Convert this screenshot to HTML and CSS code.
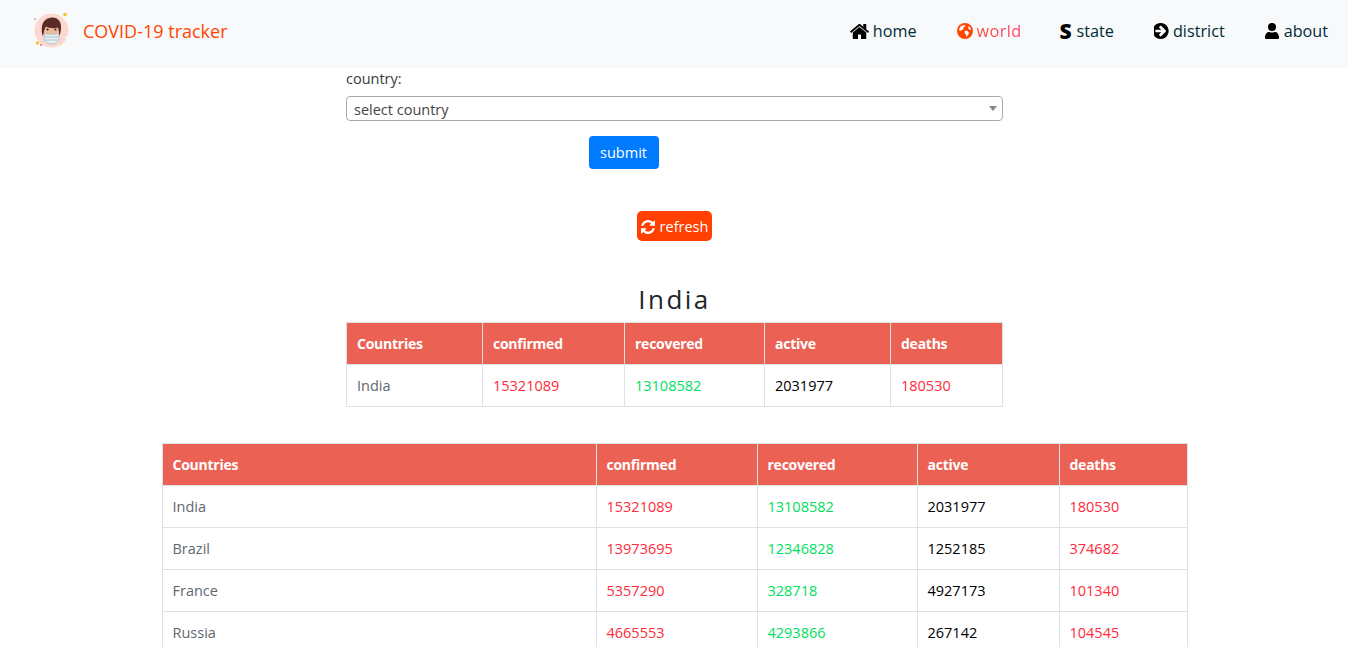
FILE: index.html
```html
<!DOCTYPE html>
<html lang="en">
<head>
<meta charset="utf-8">
<title>COVID-19 tracker</title>
<link rel="stylesheet" href="styles.css">
</head>
<body>
<nav class="navbar">
  <a class="brand" href="#">
    <svg class="logo" viewBox="0 0 40 40" aria-hidden="true">
      <circle cx="19.500" cy="19.500" r="17" fill="#fbd9d2"/>
      <circle cx="33" cy="3.500" r="1.800" fill="#f9c62e"/>
      <circle cx="3" cy="8" r="1" fill="#ee8fa8"/>
      <circle cx="5.500" cy="32" r="1.800" fill="#f9c62e"/>
      <circle cx="9" cy="34" r="1" fill="#e8607c"/>
      <circle cx="29" cy="33" r="1" fill="#f9d76e"/>
      <circle cx="34" cy="26" r="1" fill="#fff"/>
      <ellipse cx="19.500" cy="22" rx="8" ry="11.500" fill="#eebb9a"/>
      <path d="M11 25c-1.500-2-1.500-6-1-10 1-5 5-8.500 10-8.500 5.500-.5 9.500 4 9 10 0 3-.5 6-1.500 8.500-.5-3-.5-6-1.500-8.500-3 1-9 1-12-1-1.500 2-2 5-3 9.500z" fill="#5a2a26"/>
      <circle cx="15.500" cy="18.500" r="1.100" fill="#3d2320"/>
      <circle cx="23.500" cy="18.500" r="1.100" fill="#3d2320"/>
      <path d="M12.500 22.500c3 1 11 1 14 0l.5 6.500c-1.500 3-4 4-7.500 4s-6-1-7.500-4z" fill="#e6eef2" stroke="#a9bac3" stroke-width=".7"/>
      <path d="M13 26h13M13 29h13" stroke="#a9bac3" stroke-width=".8"/>
    </svg>
    <span>COVID-19 tracker</span>
  </a>
  <ul class="nav-links">
    <li><a class="nav-link" href="#">
      <svg class="nav-icon icon-home" viewBox="96 256 1600 1280"><path d="M1472 992v480q0 26-19 45t-45 19h-384v-384h-256v384h-384q-26 0-45-19t-19-45v-480q0-1 .5-3t.5-3l575-474 575 474q1 2 1 6zm223-69l-62 74q-8 9-21 11h-3q-13 0-21-7l-692-577-692 577q-12 8-24 7-13-2-21-11l-62-74q-8-10-7-23.500t11-21.500l719-599q32-26 76-26t76 26l244 204v-195q0-14 9-23t23-9h192q14 0 23 9t9 23v408l219 182q10 8 11 21.500t-7 23.500z"/></svg>home</a></li>
    <li><a class="nav-link active" href="#">
      <svg class="nav-icon icon-globe" viewBox="0 0 16 16"><circle cx="8" cy="8" r="8"/><path fill="#f8f9fa" d="M3.500 3.500l3-1.500 2 .5-1 1.500-1.500 1 .5 1.500-2 .5-1.500 1L2 6.500zM8 7.500l2.500.5 1.500 1.500-.5 2-2 2.500-.5-2.500L7.500 10zM11 3l2 1 1 2.500-1.500.5-1-1.500z"/></svg><span class="active-text">world</span></a></li>
    <li><a class="nav-link" href="#"><span class="s-icon">S</span>state</a></li>
    <li><a class="nav-link" href="#">
      <svg class="nav-icon icon-arrow" viewBox="256 128 1280 1536"><path d="M1285 896q0-27-18-45l-91-91-362-362q-18-18-45-18t-45 18l-91 91q-18 18-18 45t18 45l189 189h-502q-26 0-45 19t-19 45v128q0 26 19 45t45 19h502l-189 189q-19 19-19 45t19 45l91 91q18 18 45 18t45-18l362-362 91-91q18-18 18-45zm251 0q0 209-103 385.500t-279.500 279.500-385.500 103-385.500-103-279.500-279.500-103-385.500 103-385.500 279.500-279.500 385.500-103 385.500 103 279.500 279.500 103 385.500z"/></svg>district</a></li>
    <li><a class="nav-link" href="#">
      <svg class="nav-icon icon-user" viewBox="0 0 14 16"><circle cx="7" cy="4" r="4"/><path d="M0 14.500C0 11 2 9 4.500 9c1.500.7 3.500.7 5 0C12 9 14 11 14 14.500 14 15.500 13.500 16 12.500 16h-11C.5 16 0 15.500 0 14.500z"/></svg>about</a></li>
  </ul>
</nav>

<main class="page">
  <form class="country-form">
    <label class="field-label" for="country">country:</label>
    <div class="select-box" id="country"><span>select country</span><i class="select-arrow"></i></div>
    <button class="submit-btn" type="button">submit</button>
  </form>

  <div class="refresh-row">
    <button class="refresh-btn" type="button">
      <svg class="refresh-icon" viewBox="128 128 1536 1536"><path d="M1639 1056q0 5-1 7-64 268-268 434.500t-478 166.500q-146 0-282.500-55t-243.500-157l-129 129q-19 19-45 19t-45-19-19-45v-448q0-26 19-45t45-19h448q26 0 45 19t19 45-19 45l-137 137q71 66 161 102t187 36q134 0 250-65t186-179q11-17 53-117 8-23 30-23h192q13 0 22.500 9.500t9.500 22.500zm25-800v448q0 26-19 45t-45 19h-448q-26 0-45-19t-19-45 19-45l138-138q-148-137-349-137-134 0-250 65t-186 179q-11 17-53 117-8 23-30 23h-199q-13 0-22.500-9.500t-9.500-22.500v-7q65-268 270-434.500t480-166.500q146 0 284 55.500t245 156.500l130-129q19-19 45-19t45 19 19 45z"/></svg>refresh
    </button>
  </div>

  <h2 class="country-title">India</h2>
  <table class="stats stats-small">
    <colgroup><col class="s1"><col class="s2"><col class="s3"><col class="s4"><col class="s5"></colgroup>
    <thead><tr><th>Countries</th><th>confirmed</th><th>recovered</th><th>active</th><th>deaths</th></tr></thead>
    <tbody>
      <tr><td class="name">India</td><td class="red">15321089</td><td class="green">13108582</td><td class="black">2031977</td><td class="red">180530</td></tr>
    </tbody>
  </table>

  <table class="stats stats-large">
    <colgroup><col class="l1"><col class="l2"><col class="l3"><col class="l4"><col class="l5"></colgroup>
    <thead><tr><th>Countries</th><th>confirmed</th><th>recovered</th><th>active</th><th>deaths</th></tr></thead>
    <tbody>
      <tr><td class="name">India</td><td class="red">15321089</td><td class="green">13108582</td><td class="black">2031977</td><td class="red">180530</td></tr>
      <tr><td class="name">Brazil</td><td class="red">13973695</td><td class="green">12346828</td><td class="black">1252185</td><td class="red">374682</td></tr>
      <tr><td class="name">France</td><td class="red">5357290</td><td class="green">328718</td><td class="black">4927173</td><td class="red">101340</td></tr>
      <tr><td class="name">Russia</td><td class="red">4665553</td><td class="green">4293866</td><td class="black">267142</td><td class="red">104545</td></tr>
    </tbody>
  </table>
</main>
</body>
</html>
```
FILE: styles.css
```css
* { box-sizing: border-box; }
html, body { margin: 0; padding: 0; }
body {
  font-family: "Open Sans", "Liberation Sans", sans-serif;
  font-size: 14.500px;
  line-height: 1.5;
  color: #212529;
  background: #fff;
}
a { text-decoration: none; }

.navbar {
  display: flex;
  align-items: center;
  justify-content: space-between;
  height: 68px;
  padding: 0 20px 6px 32px;
  background: #f8f9fa;
}
.brand { display: flex; align-items: center; color: #ff4500; font-size: 18px; }
.logo { width: 40px; height: 40px; margin-right: 11px; }
.nav-links { display: flex; gap: 40px; margin: 0; padding: 0; list-style: none; }
.nav-link {
  display: flex;
  align-items: center;
  color: #002b36;
  font-size: 16.200px;
  line-height: 24px;
}
.active-text {
  background: linear-gradient(90deg, #ff4a38, #ff3d6c);
  -webkit-background-clip: text;
  background-clip: text;
  color: transparent;
  letter-spacing: .4px;
}
.nav-icon { fill: #000; margin-right: 4px; }
.icon-home { width: 19px; height: 15px; }
.icon-globe { width: 16px; height: 16px; fill: #ff4500; }
.icon-arrow { width: 16px; height: 16px; margin-right: 3px; }
.icon-user { width: 14px; height: 16px; margin-right: 5px; }
.s-icon {
  color: #000;
  font-weight: 800;
  font-size: 21px;
  line-height: 24px;
  margin: 0 5px 0 -2px;
}

.page { display: flex; flex-direction: column; align-items: center; padding-left: 1px; }
.country-form { width: 657px; display: flex; flex-direction: column; }
.field-label { line-height: 21px; margin-bottom: 7px; color: #343a40; }
.select-box {
  display: flex;
  align-items: center;
  justify-content: space-between;
  height: 25px;
  padding: 2px 5px 0 7px;
  border: 1px solid #aaa;
  border-radius: 4px;
  color: #444;
  background: #fff;
}
.select-arrow {
  border-left: 4px solid transparent;
  border-right: 4px solid transparent;
  border-top: 5px solid #888;
  margin-top: -2px;
}
.submit-btn {
  align-self: center;
  width: 70px;
  height: 33px;
  margin: 15px 0 0 -102px;
  border: 0;
  border-radius: 4px;
  background: #007bff;
  color: #fff;
  font: inherit;
}
.refresh-row { margin-top: 42px; }
.refresh-btn {
  display: flex;
  align-items: center;
  height: 30px;
  padding: 1px 4px 0 4px;
  border: 0;
  border-radius: 5px;
  background: #ff4000;
  color: #fff;
  font: inherit;
}
.refresh-icon { width: 14px; height: 14px; margin-right: 5px; fill: #fff; }
.country-title {
  margin: 38px 0 0;
  font-size: 26px;
  font-weight: 400;
  line-height: 40px;
  letter-spacing: 2.500px;
  color: #212529;
}
.stats { border-collapse: collapse; table-layout: fixed; }
.stats th, .stats td {
  height: 42px;
  padding: 0 10px;
  border: 1px solid #dee2e6;
  text-align: left;
}
.stats th {
  background: #eb6255;
  color: #fff;
  font-size: 14px;
  font-weight: 700;
  letter-spacing: -.25px;
}
.stats td { font-weight: 400; }
.stats-small { width: 656px; margin-top: 3px; }
.stats-large { width: 1025px; margin-top: 36px; }
.name { color: #5f6770; }
.red { color: #ff2a3a; }
.green { color: #00e060; }
.black { color: #000; }
.s1 { width: 136px; } .s2 { width: 142px; } .s3 { width: 140px; } .s4 { width: 126px; } .s5 { width: 112px; }
.l1 { width: 434px; } .l2 { width: 161px; } .l3 { width: 160px; } .l4 { width: 142px; } .l5 { width: 128px; }
```
